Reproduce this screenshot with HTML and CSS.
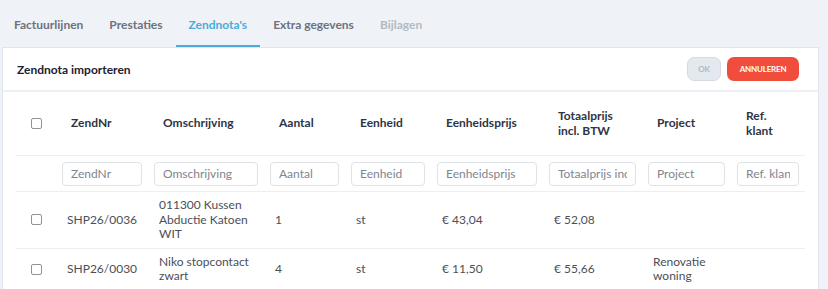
FILE: index.html
```html
<!DOCTYPE html>
<html lang="nl">
<head>
    <meta charset="UTF-8">
    <meta name="viewport" content="width=device-width, initial-scale=1.0">
    <title>Zendnota importeren</title>
    <link rel="stylesheet" href="styles.css">
</head>
<body>
    <div class="tabs">
        <a class="tab">Factuurlijnen</a>
        <a class="tab">Prestaties</a>
        <a class="tab active">Zendnota's</a>
        <a class="tab">Extra gegevens</a>
        <a class="tab disabled">Bijlagen</a>
    </div>

    <div class="page">
        <div class="card">
            <div class="card-header">
                <h2>Zendnota importeren</h2>
                <div class="actions">
                    <button class="btn btn-ok" disabled>OK</button>
                    <button class="btn btn-cancel">ANNULEREN</button>
                </div>
            </div>

            <div class="card-body">
                <table class="grid">
                    <colgroup>
                        <col style="width: 40px">
                        <col style="width: 92px">
                        <col style="width: 116px">
                        <col style="width: 81px">
                        <col style="width: 86px">
                        <col style="width: 112px">
                        <col style="width: 99px">
                        <col style="width: 89px">
                        <col style="width: 74px">
                    </colgroup>
                    <thead>
                        <tr class="head">
                            <th class="check"><input type="checkbox"></th>
                            <th>ZendNr</th>
                            <th>Omschrijving</th>
                            <th>Aantal</th>
                            <th>Eenheid</th>
                            <th>Eenheidsprijs</th>
                            <th>Totaalprijs<br>incl. BTW</th>
                            <th>Project</th>
                            <th>Ref.<br>klant</th>
                        </tr>
                        <tr class="filters">
                            <td></td>
                            <td><input type="text" placeholder="ZendNr"></td>
                            <td><input type="text" placeholder="Omschrijving"></td>
                            <td><input type="text" placeholder="Aantal"></td>
                            <td><input type="text" placeholder="Eenheid"></td>
                            <td><input type="text" placeholder="Eenheidsprijs"></td>
                            <td><input type="text" placeholder="Totaalprijs incl. BTW"></td>
                            <td><input type="text" placeholder="Project"></td>
                            <td><input type="text" placeholder="Ref. klant"></td>
                        </tr>
                    </thead>
                    <tbody>
                        <tr>
                            <td class="check"><input type="checkbox"></td>
                            <td>SHP26/0036</td>
                            <td>011300 Kussen Abductie Katoen WIT</td>
                            <td>1</td>
                            <td>st</td>
                            <td>€ 43,04</td>
                            <td>€ 52,08</td>
                            <td></td>
                            <td></td>
                        </tr>
                        <tr>
                            <td class="check"><input type="checkbox"></td>
                            <td>SHP26/0030</td>
                            <td>Niko stopcontact zwart</td>
                            <td>4</td>
                            <td>st</td>
                            <td>€ 11,50</td>
                            <td>€ 55,66</td>
                            <td>Renovatie woning</td>
                            <td></td>
                        </tr>
                    </tbody>
                </table>
            </div>
        </div>
    </div>
</body>
</html>
```

FILE: styles.css
```css
body {
    margin: 0;
    font-family: 'Lato', 'Noto Sans', sans-serif;
    font-size: 12px;
    color: #4b4f57;
    background-color: #eff2f6;
}
.tabs {
    display: flex;
    height: 47px;
    padding-left: 1px;
    box-sizing: border-box;
}
.tab {
    display: flex;
    align-items: center;
    padding: 4px 13px 0;
    font-weight: 700;
    color: #6c737e;
    border-bottom: 2px solid transparent;
}
.tab.active {
    color: #4aabdc;
    border-bottom-color: #4aabdc;
}
.tab.disabled {
    color: #b4b9c1;
}
.page {
    padding: 0 9px 0 2px;
}
.card {
    background-color: white;
    border: 1px solid #e1e5eb;
    border-bottom: none;
}
.card-header {
    display: flex;
    align-items: center;
    justify-content: space-between;
    height: 42px;
    padding: 0 19px 0 14px;
    border-bottom: 2px solid #edf0f4;
}
.card-header h2 {
    margin: 0;
    font-size: 12px;
    font-weight: 700;
    color: #1d2130;
}
.actions {
    display: flex;
    gap: 6px;
}
.btn {
    height: 24px;
    border-radius: 7px;
    font-family: inherit;
    font-size: 8px;
    font-weight: 700;
    letter-spacing: -0.2px;
    cursor: pointer;
}
.btn-ok {
    width: 34px;
    background-color: #e4e8ef;
    border: 1px solid #d6dbe3;
    color: #b3b8c2;
}
.btn-cancel {
    width: 72px;
    background-color: #f04d3c;
    border: none;
    color: white;
}
.card-body {
    padding: 0 13px 0 13px;
}
.grid {
    border-collapse: collapse;
    table-layout: fixed;
    width: 789px;
}
.grid th,
.grid td {
    padding: 0 6px;
    text-align: left;
    vertical-align: middle;
    line-height: 14.5px;
}
.grid th {
    height: 63px;
    padding-left: 15px;
    font-weight: 700;
    color: #2e3444;
    border-bottom: 1px solid #eceef1;
}
.grid th.check,
.grid td.check {
    padding-left: 15px;
}
.grid .filters td {
    height: 35px;
    border-bottom: 1px solid #eceef1;
}
.filters input {
    width: 100%;
    height: 24px;
    box-sizing: border-box;
    padding: 0 8px;
    border: 1px solid #dfe2e7;
    border-radius: 4px;
    font-family: inherit;
    font-size: 12px;
    color: #4b4f57;
}
.filters input::placeholder {
    color: #80858e;
}
.grid tbody td {
    padding: 6px 6px 6px 11px;
    border-bottom: 1px solid #eceef1;
}
input[type="checkbox"] {
    appearance: none;
    width: 11px;
    height: 11px;
    margin: 0;
    border: 1px solid #8d929b;
    border-radius: 2px;
    display: block;
}
```
